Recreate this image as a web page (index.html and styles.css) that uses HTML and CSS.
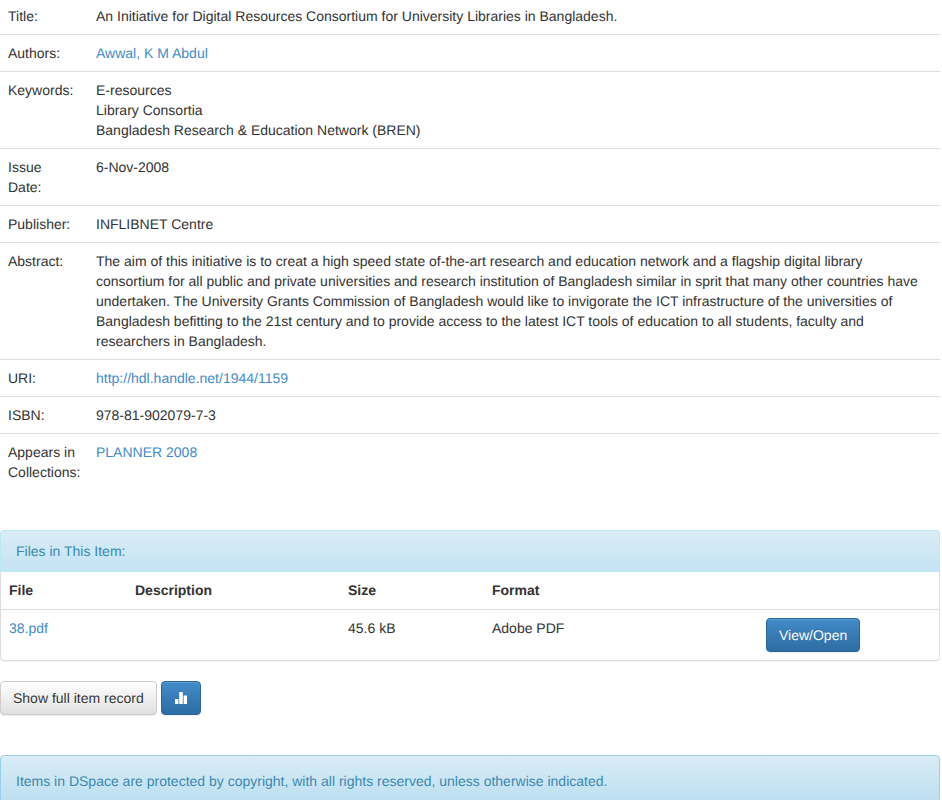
FILE: index.html
```html
<!DOCTYPE html>
<html lang="en">
<head>
<meta charset="utf-8">
<title>An Initiative for Digital Resources Consortium</title>
<link rel="stylesheet" href="styles.css">
</head>
<body>
<main class="page">
  <table class="meta">
    <tr><td class="label">Title:</td><td>An Initiative for Digital Resources Consortium for University Libraries in Bangladesh.</td></tr>
    <tr><td class="label">Authors:</td><td><a href="#">Awwal, K M Abdul</a></td></tr>
    <tr><td class="label">Keywords:</td><td>E-resources<br>Library Consortia<br>Bangladesh Research &amp; Education Network (BREN)</td></tr>
    <tr><td class="label">Issue<br>Date:</td><td>6-Nov-2008</td></tr>
    <tr><td class="label">Publisher:</td><td>INFLIBNET Centre</td></tr>
    <tr><td class="label">Abstract:</td><td>The aim of this initiative is to creat a high speed state of-the-art research and education network and a flagship digital library consortium for all public and private universities and research institution of Bangladesh similar in sprit that many other countries have undertaken. The University Grants Commission of Bangladesh would like to invigorate the ICT infrastructure of the universities of Bangladesh befitting to the 21st century and to provide access to the latest ICT tools of education to all students, faculty and researchers in Bangladesh.</td></tr>
    <tr><td class="label">URI:</td><td><a href="#">http://hdl.handle.net/1944/1159</a></td></tr>
    <tr><td class="label">ISBN:</td><td>978-81-902079-7-3</td></tr>
    <tr><td class="label">Appears in Collections:</td><td><a href="#">PLANNER 2008</a></td></tr>
  </table>

  <section class="panel files">
    <div class="panel-heading">Files in This Item:</div>
    <table class="file-table">
      <thead>
        <tr><th class="col-file">File</th><th class="col-desc">Description</th><th class="col-size">Size</th><th class="col-format">Format</th><th></th></tr>
      </thead>
      <tbody>
        <tr>
          <td><a href="#">38.pdf</a></td>
          <td></td>
          <td>45.6 kB</td>
          <td>Adobe PDF</td>
          <td><a class="btn btn-primary view" href="#">View/Open</a></td>
        </tr>
      </tbody>
    </table>
  </section>

  <div class="actions">
    <a class="btn btn-default" href="#">Show full item record</a>
    <a class="btn btn-primary stats" href="#" aria-label="Statistics">
      <svg width="14" height="14" viewBox="0 0 14 14" aria-hidden="true"><path fill="#fff" d="M1 8h3.4v5H1zM5.2 1h3.6v12H5.2zM9.6 4.5h3.4V13H9.6z"/></svg>
    </a>
  </div>

  <section class="alert">Items in DSpace are protected by copyright, with all rights reserved, unless otherwise indicated.</section>
</main>
</body>
</html>
```

FILE: styles.css
```css
* { box-sizing: border-box; }
html { height: 800px; overflow: hidden; background: #fff; }
body {
  margin: 0;
  font-family: "Liberation Sans", Arial, sans-serif;
  font-size: 14px;
  line-height: 20px;
  color: #333;
  text-rendering: geometricPrecision;
}
.page { width: 940px; margin-top: -3px; }
a { color: #428bca; text-decoration: none; }

table { border-collapse: collapse; border-spacing: 0; width: 100%; table-layout: fixed; }
td, th { padding: 8px; vertical-align: top; text-align: left; }

.meta { margin-bottom: 20px; }
.meta td { border-top: 1px solid #ddd; }
.meta .label { width: 88px; }

.panel {
  background: #fff;
  border: 1px solid #ddd;
  border-radius: 4px;
  box-shadow: 0 1px 1px rgba(0, 0, 0, .05);
}
.panel-heading {
  margin: -1px -1px 0;
  padding: 10px 15px;
  color: #3a87ad;
  background: linear-gradient(to bottom, #d9edf7 0, #c4e3f3 100%);
  border: 1px solid #bce8f1;
  border-radius: 4px 4px 0 0;
}
.files { margin-top: 40px; }
.file-table th { padding-bottom: 9px; }
.file-table td { border-top: 1px solid #ddd; }
.col-file { width: 126px; }
.col-desc { width: 213px; }
.col-size { width: 144px; }
.col-format { width: 274px; }

.btn {
  display: inline-block;
  padding: 6px 12px;
  font-size: 14px;
  line-height: 20px;
  border: 1px solid transparent;
  border-radius: 4px;
  vertical-align: middle;
  text-align: center;
  box-shadow: inset 0 1px 0 rgba(255, 255, 255, .15), 0 1px 1px rgba(0, 0, 0, .075);
}
.btn-primary {
  color: #fff;
  background: linear-gradient(to bottom, #428bca 0, #2d6ca2 100%);
  border-color: #2b669a;
  text-shadow: 0 -1px 0 rgba(0, 0, 0, .2);
}
.btn-default {
  color: #333;
  background: linear-gradient(to bottom, #fff 0, #e0e0e0 100%);
  border-color: #ccc;
  text-shadow: 0 1px 0 #fff;
}
.view { display: block; width: 94px; }
.stats { width: 40px; height: 34px; padding: 0; display: inline-flex; align-items: center; justify-content: center; }

.actions { margin-top: 20px; display: flex; gap: 4px; }

.alert {
  margin-top: 40px;
  padding: 15px;
  color: #3a87ad;
  background: linear-gradient(to bottom, #d9edf7 0, #b9def0 100%);
  border: 1px solid #9acfea;
  border-radius: 4px;
  text-shadow: 0 1px 0 rgba(255, 255, 255, .2);
  box-shadow: inset 0 1px 0 rgba(255, 255, 255, .25), 0 1px 2px rgba(0, 0, 0, .05);
}
```
